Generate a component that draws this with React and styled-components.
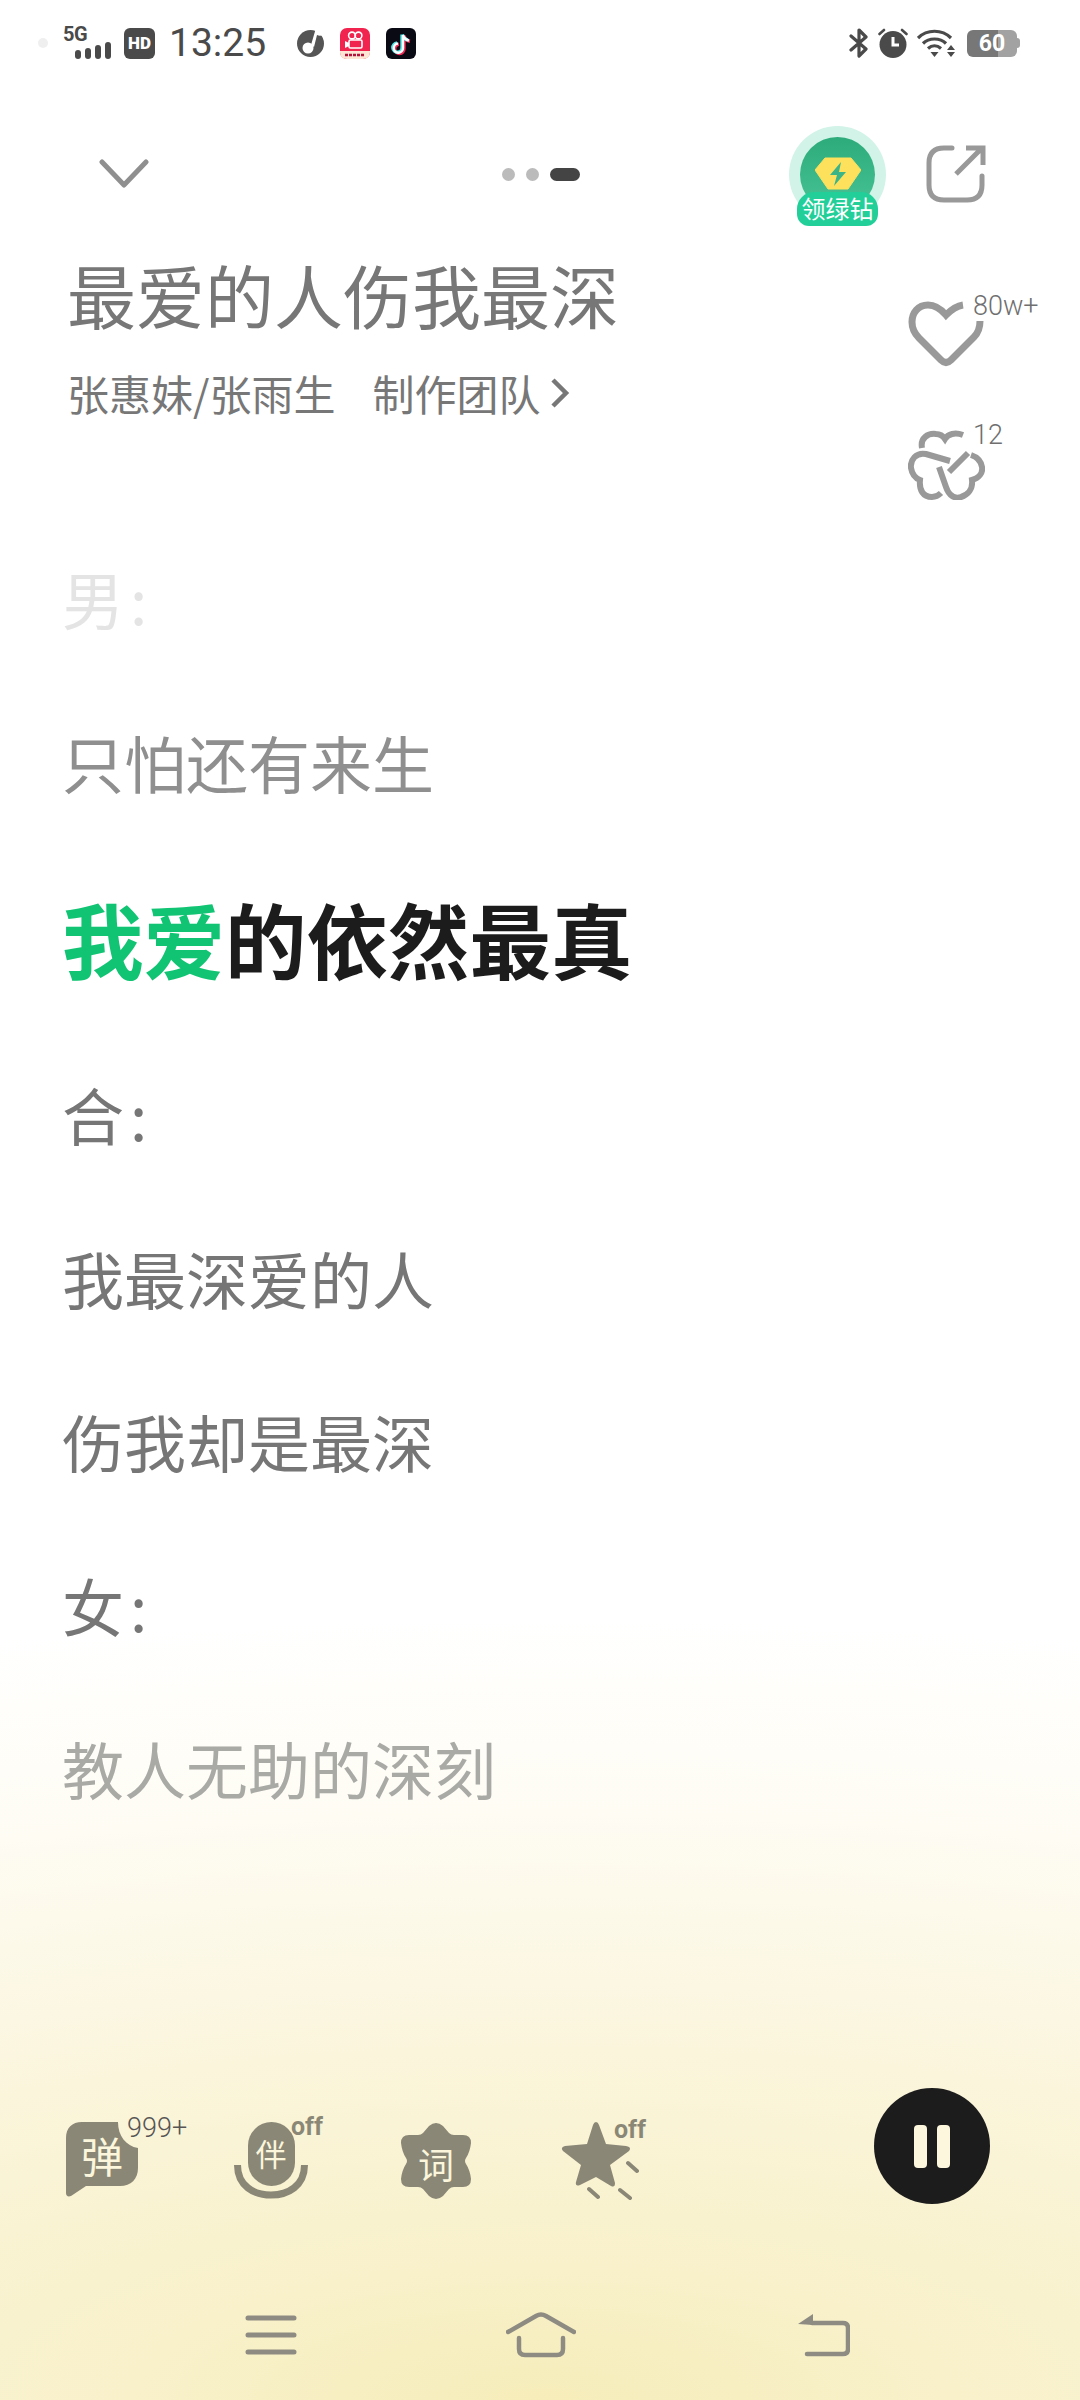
import React from 'react';
import styled, { createGlobalStyle } from 'styled-components';

const GlobalStyle = createGlobalStyle`
    html, body {
        margin: 0;
        padding: 0;
        background: white;
    }
    body {
        font-family: "Noto Sans CJK SC", "Noto Sans", sans-serif;
    }
`

const lyrics = [
    { text: '男 :', tone: 'faint' },
    { text: '只怕还有来生', tone: 'soft' },
    { sung: '我爱', text: '的依然最真', active: true },
    { text: '合 :', tone: 'normal' },
    { text: '我最深爱的人', tone: 'normal' },
    { text: '伤我却是最深', tone: 'normal' },
    { text: '女 :', tone: 'normal' },
    { text: '教人无助的深刻', tone: 'light' },
];

const toneColors = {
    faint: '#e4e4e4',
    soft: '#8f8f8f',
    normal: '#767676',
    light: '#a9a9a6',
};

export default function App() {
    return (
        <>
        <GlobalStyle />
        <Page>
            <StatusBar>
                <StatusGroup>
                    <CameraDot />
                    <Signal>
                        <SignalLabel>5G</SignalLabel>
                        <svg width="36" height="17" viewBox="0 0 36 17" fill="#4a4a4a">
                            <rect x="0" y="8" width="6" height="9" rx="3" />
                            <rect x="10" y="6" width="6" height="11" rx="3" />
                            <rect x="20" y="3" width="6" height="14" rx="3" />
                            <rect x="30" y="0" width="6" height="17" rx="3" />
                        </svg>
                    </Signal>
                    <HdBadge>HD</HdBadge>
                    <Clock>13:25</Clock>
                    <AppIcons>
                        <svg width="27" height="30" viewBox="0 0 27 30">
                            <circle cx="13.5" cy="15.5" r="13.5" fill="#555" />
                            <path d="M19 0 L14 17 L17 19 L20 7 C22 8 24 8 26 7 L24 2Z" fill="white" />
                            <circle cx="11" cy="20" r="5.5" fill="white" />
                        </svg>
                        <svg width="30" height="31" viewBox="0 0 30 31">
                            <rect width="30" height="31" rx="7" fill="#f1244f" />
                            <path d="M0 23 H30 V24 Q30 31 23 31 H7 Q0 31 0 24Z" fill="#fde6d4" />
                            <circle cx="12" cy="7.5" r="3.4" fill="none" stroke="#fff" strokeWidth="1.6" />
                            <circle cx="18.5" cy="7.5" r="3.4" fill="none" stroke="#fff" strokeWidth="1.6" />
                            <rect x="9" y="12" width="13" height="8" rx="1.5" fill="none" stroke="#fff" strokeWidth="1.6" />
                            <path d="M5 13 L9 15 V18 L5 20Z" fill="#fff" />
                            <path d="M5 27 H25" stroke="#b3123a" strokeWidth="2.5" strokeDasharray="3 1" />
                        </svg>
                        <svg width="30" height="31" viewBox="0 0 30 31">
                            <rect width="30" height="31" rx="6" fill="#0a0a14" />
                            <path d="M17 7 V20 A4.6 4.6 0 1 1 12 15.5 M17 7 C18 10 20 12 23 12.5" fill="none" stroke="#f02a55" strokeWidth="3.4" transform="translate(1 .8)" />
                            <path d="M17 7 V20 A4.6 4.6 0 1 1 12 15.5 M17 7 C18 10 20 12 23 12.5" fill="none" stroke="#4fe3e6" strokeWidth="3.4" transform="translate(-1 -.5)" />
                            <path d="M17 7 V20 A4.6 4.6 0 1 1 12 15.5 M17 7 C18 10 20 12 23 12.5" fill="none" stroke="#fff" strokeWidth="2.4" />
                        </svg>
                    </AppIcons>
                </StatusGroup>
                <StatusRight>
                    <svg width="20" height="30" viewBox="0 0 20 30" fill="none" stroke="#4a4a4a" strokeWidth="3.2">
                        <path d="M2 8 L17 21 L10 28 V2 L17 9 L2 22" strokeLinecap="round" strokeLinejoin="round" />
                    </svg>
                    <svg width="30" height="30" viewBox="0 0 30 30">
                        <circle cx="15" cy="16.5" r="13.5" fill="#4a4a4a" />
                        <path d="M15 9 V17 H21" fill="none" stroke="#fff" strokeWidth="3" />
                        <path d="M1.5 6 L6 2 M28.5 6 L24 2" stroke="#4a4a4a" strokeWidth="2.6" strokeLinecap="round" />
                    </svg>
                    <svg width="39" height="28" viewBox="0 0 39 28" fill="none" stroke="#4a4a4a" strokeWidth="3.2">
                        <path d="M1 9 C10 0 25 0 34 9" />
                        <path d="M6 14.5 C12 8.5 23 8.5 29 14.5" />
                        <path d="M11 19.5 C15 16 20 16 24 19.5" />
                        <path d="M13.5 23 H21.5 L17.5 28Z" fill="#4a4a4a" stroke="none" />
                        <path d="M34 16 L38 21 H30Z M30 23 H38 L34 28Z" fill="#4a4a4a" stroke="none" />
                    </svg>
                    <Battery>
                        <BatteryCell>60</BatteryCell>
                        <BatteryTip />
                    </Battery>
                </StatusRight>
            </StatusBar>

            <TopRow>
                <svg width="50" height="30" viewBox="0 0 50 30" fill="none" stroke="#8f8f8f" strokeWidth="5" strokeLinecap="round" strokeLinejoin="round">
                    <path d="M3 3 L25 26 L47 3" />
                </svg>
                <PageDots>
                    <Dot />
                    <Dot />
                    <Dot $current />
                </PageDots>
                <TopActions>
                    <VipBadge>
                        <VipCircle>
                            <svg width="46" height="33" viewBox="0 0 46 33">
                                <path d="M10 1 H36 L46 13 L33 32 H13 L0 13Z" fill="#fde05c" stroke="#fde05c" strokeWidth="1" strokeLinejoin="round" />
                                <path d="M26 5 L15 18 H22 L19 29 L31 15 H24Z" fill="#3bb488" />
                            </svg>
                        </VipCircle>
                        <VipLabel>领绿钻</VipLabel>
                    </VipBadge>
                    <svg width="60" height="58" viewBox="0 0 60 58" fill="none" stroke="#999" strokeWidth="5">
                        <path d="M26 3 H18 Q3 3 3 18 V40 Q3 55 18 55 H41 Q56 55 56 40 V31" strokeLinecap="round" />
                        <path d="M30 29 L56 3 M40 3 H57 V20" />
                    </svg>
                </TopActions>
            </TopRow>

            <SongRow>
                <SongInfo>
                    <SongTitle>最爱的人伤我最深</SongTitle>
                    <SongMeta>
                        <span>张惠妹/张雨生</span>
                        <CrewLink>制作团队</CrewLink>
                        <svg width="20" height="32" viewBox="0 0 20 32" fill="none" stroke="#777" strokeWidth="4.5">
                            <path d="M3 3 L16 16 L3 29" />
                        </svg>
                    </SongMeta>
                </SongInfo>
                <SongActions>
                    <CountButton>
                        <svg width="77" height="66" viewBox="0 0 77 66" fill="none" stroke="#999" strokeWidth="7" strokeLinecap="butt">
                            <path d="M55 4 C48 5 43 9 38 14 C32 7 26 4 20 4 C10 4 4 12 4 21 C4 28 7 33 11 37 L33 59 Q38 64 43 59 L66 36 C70 32 72 27 72 20" />
                        </svg>
                        <Count>80w+</Count>
                    </CountButton>
                    <CountButton>
                        <svg width="77" height="70" viewBox="0 0 77 70" fill="none" stroke="#999" strokeWidth="6">
                            <path d="M14 18 C12 8 20 3 28 4 C32 4 35 6 37 9 C40 4 47 2 55 5" />
                            <path d="M42 31 L18 24 C8 22 2 30 3 38 C4 44 7 48 12 50 C11 60 15 67 24 67 C28 67 31 65 33 63" />
                            <path d="M31 37 L38 57 C41 66 47 69 53 67 C60 65 65 59 64 50 C71 48 75 43 74 37 C73 31 69 27 63 25" />
                            <path d="M60 23 L41 42" />
                        </svg>
                        <Count>12</Count>
                    </CountButton>
                </SongActions>
            </SongRow>

            <LyricList>
                {
                    lyrics.map((line, index) => {
                        if (line.active) {
                            return (
                                <ActiveLine key={index}>
                                    <Sung>{line.sung}</Sung>{line.text}
                                </ActiveLine>
                            );
                        }
                        return <LyricLine key={index} $tone={line.tone}>{line.text}</LyricLine>;
                    })
                }
            </LyricList>

            <ToolBar>
                <Tool $width={168}>
                    <IconBox>
                        <svg width="73" height="75" viewBox="0 0 73 75" fill="#8a8776">
                            <path d="M16 0 H52 C52 14 60 24 72 26 V46 C72 57 65 64 54 64 H20 L5 74 C2 75 0 74 0 71 V16 C0 6 6 0 16 0Z" />
                        </svg>
                        <ToolGlyph $size={42} $x={36} $y={33}>弹</ToolGlyph>
                        <ToolCount>999+</ToolCount>
                    </IconBox>
                </Tool>
                <Tool $width={166}>
                    <IconBox>
                        <svg width="74" height="77" viewBox="0 0 74 77" fill="#8a8776">
                            <rect x="14" y="0" width="47" height="64" rx="23.5" />
                            <path d="M3.5 43 C3.5 64 20 73 37 73 C54 73 70.5 64 70.5 43" fill="none" stroke="#8a8776" strokeWidth="7" />
                        </svg>
                        <ToolGlyph $size={31} $x={37} $y={30}>伴</ToolGlyph>
                        <OffTag $x={57} $y={-10}>off</OffTag>
                    </IconBox>
                </Tool>
                <Tool $width={161}>
                    <IconBox>
                        <svg width="73" height="78" viewBox="0 0 73 78" fill="#8a8776">
                            <path d="M29 4 Q36 -2 43 4 L49 11 Q51 13 54 13 L63 13 Q71 13 71 21 Q70 30 66 36 Q64 39 66 42 Q70 48 71 57 Q71 65 63 65 L54 65 Q51 65 49 67 L43 74 Q36 80 29 74 L23 67 Q21 65 18 65 L9 65 Q1 65 1 57 Q2 48 6 42 Q8 39 6 36 Q2 30 1 21 Q1 13 9 13 L18 13 Q21 13 23 11 Z" />
                        </svg>
                        <ToolGlyph $size={36} $x={36} $y={41}>词</ToolGlyph>
                    </IconBox>
                </Tool>
                <Tool $width={100}>
                    <IconBox>
                        <svg width="78" height="78" viewBox="0 0 78 78">
                            <path d="M35 0 Q37 0 38 3 L45 22 L65 24 Q71 25 68 29 L49 43 L54 61 Q54 66 50 64 L35 55 L19 63 Q14 65 15 60 L20 43 L2 29 Q-1 25 4 24 L26 22 L32 3 Q33 0 35 0Z" fill="#8a8776" />
                            <path d="M67 41 L76 49 M28 67 L37 75 M59 68 L69 76" stroke="#8a8776" strokeWidth="4" strokeLinecap="round" />
                        </svg>
                        <OffTag $x={53} $y={-7}>off</OffTag>
                    </IconBox>
                </Tool>
                <PauseButton>
                    <PauseBar />
                    <PauseBar />
                </PauseButton>
            </ToolBar>

            <NavBar>
                <svg width="52" height="40" viewBox="0 0 52 40" stroke="#8e8b82" strokeWidth="5" strokeLinecap="round">
                    <path d="M3 3 H49 M3 20 H49 M3 37 H49" />
                </svg>
                <svg width="70" height="46" viewBox="0 0 70 46" fill="none" stroke="#8e8b82" strokeWidth="4.5" strokeLinecap="round">
                    <path d="M2 20 L30 4 Q35 1 40 4 L68 20" />
                    <path d="M13 26 V37 Q13 43 19 43 H51 Q57 43 57 37 V26" />
                </svg>
                <svg width="52" height="44" viewBox="0 0 52 44" fill="none" stroke="#8e8b82" strokeWidth="4.5" strokeLinecap="round">
                    <path d="M14 10 H45 Q50 10 50 15 V36 Q50 41 45 41 H9" />
                    <path d="M0 11 L15 1 V12Z" fill="#8e8b82" stroke="none" />
                </svg>
            </NavBar>
        </Page>
        </>
    )
}

const Page = styled.div`
    width: 1080px;
    height: 2400px;
    display: flex;
    flex-direction: column;
    overflow: hidden;
    background: radial-gradient(ellipse 2400px 780px at 50% 2400px, #f6edba 0, #f8f1ca 17%, #fbf5dc 45%, #fefcf3 75%, #ffffff 100%);
`

const StatusBar = styled.div`
    height: 108px;
    box-sizing: border-box;
    padding: 27px 60px 0 38px;
    display: flex;
    justify-content: space-between;
    align-items: flex-start;
    flex-shrink: 0;
`
const StatusGroup = styled.div`
    display: flex;
    align-items: center;
    height: 32px;
`
const StatusRight = styled(StatusGroup)`
    gap: 9px;
`
const CameraDot = styled.div`
    width: 10px;
    height: 10px;
    border-radius: 50%;
    background: #efefef;
    margin-right: 15px;
`
const Signal = styled.div`
    width: 48px;
    margin-right: 13px;
    display: flex;
    flex-direction: column;
    align-items: flex-end;
`
const SignalLabel = styled.div`
    align-self: flex-start;
    font-family: "Roboto", sans-serif;
    font-weight: 700;
    font-size: 20px;
    line-height: 15px;
    letter-spacing: -0.5px;
    color: #4a4a4a;
`
const HdBadge = styled.div`
    width: 31px;
    height: 31px;
    border-radius: 6px;
    background: #4a4a4a;
    color: white;
    font-family: "Roboto", sans-serif;
    font-weight: 900;
    font-size: 17px;
    line-height: 31px;
    text-align: center;
`
const Clock = styled.div`
    margin-left: 14px;
    width: 97px;
    font-family: "Roboto", sans-serif;
    font-size: 39px;
    line-height: 36px;
    color: #4a4a4a;
    white-space: nowrap;
`
const AppIcons = styled.div`
    margin-left: 31px;
    display: flex;
    align-items: center;
    gap: 16px;
`
const Battery = styled.div`
    display: flex;
    align-items: center;
    margin-left: 2px;
`
const BatteryCell = styled.div`
    width: 50px;
    height: 27px;
    border-radius: 6px;
    background: linear-gradient(90deg, #777 0, #777 62%, #a2a2a2 62%);
    color: white;
    font-family: "Roboto", sans-serif;
    font-weight: 700;
    font-size: 23px;
    line-height: 27px;
    text-align: center;
`
const BatteryTip = styled.div`
    width: 3px;
    height: 10px;
    border-radius: 0 3px 3px 0;
    background: #a2a2a2;
`

const TopRow = styled.div`
    height: 132px;
    box-sizing: border-box;
    padding: 0 94px 0 99px;
    display: grid;
    grid-template-columns: 1fr auto 1fr;
    align-items: center;
    flex-shrink: 0;
    svg { display: block; }
`
const PageDots = styled.div`
    display: flex;
    align-items: center;
    gap: 11px;
    margin-left: -3px;
`
const Dot = styled.div`
    width: ${props => (props.$current ? '30px' : '13px')};
    height: 13px;
    border-radius: 7px;
    background: ${props => (props.$current ? '#444' : '#bbb')};
`
const TopActions = styled.div`
    display: flex;
    justify-content: flex-end;
    align-items: center;
    gap: 40px;
`
const VipBadge = styled.div`
    position: relative;
    width: 97px;
    height: 97px;
    border-radius: 50%;
    background: #d2f3e8;
    display: flex;
    align-items: center;
    justify-content: center;
`
const VipCircle = styled.div`
    width: 75px;
    height: 75px;
    border-radius: 50%;
    background: linear-gradient(180deg, #2dab7a, #48c497);
    display: flex;
    align-items: center;
    justify-content: center;
    padding-bottom: 2px;
    box-sizing: border-box;
`
const VipLabel = styled.div`
    position: absolute;
    left: 8px;
    top: 66px;
    width: 81px;
    height: 34px;
    border-radius: 17px 17px 12px 12px;
    background: #22cf99;
    color: white;
    font-size: 24px;
    line-height: 32px;
    text-align: center;
    white-space: nowrap;
`

const SongRow = styled.div`
    height: 277px;
    box-sizing: border-box;
    padding-left: 67px;
    display: flex;
    justify-content: space-between;
    flex-shrink: 0;
`
const SongInfo = styled.div`
    padding-top: 9px;
`
const SongTitle = styled.div`
    font-size: 69px;
    line-height: 90px;
    color: #777;
    white-space: nowrap;
`
const SongMeta = styled.div`
    margin-top: 29px;
    display: flex;
    align-items: center;
    font-size: 42px;
    line-height: 50px;
    color: #777;
    white-space: nowrap;
`
const CrewLink = styled.span`
    margin-left: 37px;
    margin-right: 10px;
`
const SongActions = styled.div`
    padding: 61px 95px 0 0;
    display: flex;
    flex-direction: column;
    gap: 63px;
`
const CountButton = styled.div`
    position: relative;
    width: 77px;
    svg { display: block; }
`
const Count = styled.div`
    position: absolute;
    left: 65px;
    top: -13px;
    font-family: "Roboto", sans-serif;
    font-weight: 300;
    font-size: 27px;
    line-height: 36px;
    color: #6f6f6f;
    white-space: nowrap;
`

const LyricList = styled.div`
    flex: 1;
    padding-left: 62px;
`
const LyricLine = styled.div`
    height: 163.5px;
    font-size: 62px;
    line-height: 163.5px;
    word-spacing: -8px;
    color: ${props => toneColors[props.$tone]};
    white-space: nowrap;
`
const ActiveLine = styled.div`
    height: 189px;
    font-size: 81.5px;
    line-height: 186px;
    font-weight: 700;
    color: #1c1c1c;
    white-space: nowrap;
`
const Sung = styled.span`
    color: #11c473;
`

const ToolBar = styled.div`
    height: 116px;
    box-sizing: border-box;
    padding: 0 90px 0 66px;
    display: flex;
    align-items: flex-start;
    flex-shrink: 0;
`
const Tool = styled.div`
    width: ${props => props.$width}px;
    flex-shrink: 0;
    margin-top: 34px;
`
const IconBox = styled.div`
    position: relative;
    display: inline-block;
    svg { display: block; }
`
const ToolGlyph = styled.span`
    position: absolute;
    left: ${props => props.$x}px;
    top: ${props => props.$y}px;
    transform: translate(-50%, -50%);
    font-size: ${props => props.$size}px;
    line-height: 1;
    color: #fbf6dc;
`
const ToolCount = styled.span`
    position: absolute;
    left: 61px;
    top: -12px;
    font-family: "Roboto", sans-serif;
    font-weight: 300;
    font-size: 27px;
    line-height: 36px;
    color: #555;
`
const OffTag = styled.span`
    position: absolute;
    left: ${props => props.$x}px;
    top: ${props => props.$y}px;
    font-family: "Roboto", sans-serif;
    font-weight: 700;
    font-size: 25px;
    line-height: 30px;
    color: #8a8776;
`
const PauseButton = styled.div`
    margin-left: auto;
    width: 116px;
    height: 116px;
    border-radius: 50%;
    background: #1c1c1c;
    display: flex;
    align-items: center;
    justify-content: center;
    gap: 10px;
`
const PauseBar = styled.div`
    width: 13px;
    height: 43px;
    border-radius: 4px;
    background: #fdf7de;
`

const NavBar = styled.div`
    height: 196px;
    box-sizing: border-box;
    padding: 108px 0 42px 245px;
    display: grid;
    grid-template-columns: 261px 292px auto;
    align-items: center;
    flex-shrink: 0;
    svg { display: block; }
`
